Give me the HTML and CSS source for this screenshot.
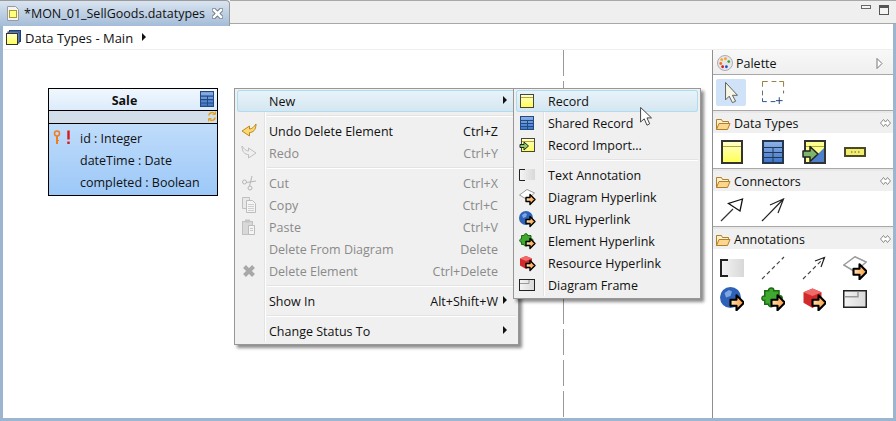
FILE: index.html
```html
<!DOCTYPE html>
<html lang="en">

<head>
  <meta charset="UTF-8">
  <title>MON_01_SellGoods.datatypes</title>
  <link rel="stylesheet" href="styles.css">
</head>

<body>
  <svg class="defs" width="0" height="0">
    <defs>
      <linearGradient id="yel" x1="0" y1="0" x2="0" y2="1">
        <stop offset="0" stop-color="#ffffd0" />
        <stop offset="1" stop-color="#ffff50" />
      </linearGradient>
      <linearGradient id="blu" x1="0" y1="0" x2="0" y2="1">
        <stop offset="0" stop-color="#8fb4ea" />
        <stop offset="1" stop-color="#3a74c8" />
      </linearGradient>
      <linearGradient id="gry" x1="0" y1="0" x2="1" y2="0">
        <stop offset="0" stop-color="#f4f4f4" />
        <stop offset="1" stop-color="#d8d8d8" />
      </linearGradient>
      <linearGradient id="org" x1="0" y1="0" x2="1" y2="0">
        <stop offset="0" stop-color="#ffe2b4" />
        <stop offset="1" stop-color="#ff9a3a" />
      </linearGradient>
      <g id="arrow">
        <path d="M1 3.500h4V0.500L10 5.500 5 10.500V7.500H1z" fill="url(#org)" stroke="#000" stroke-width="1.400" stroke-linejoin="round" />
      </g>
      <g id="record">
        <rect x="0.500" y="0.500" width="13" height="13" fill="url(#yel)" stroke="#444" />
        <path d="M1 3.500h12" stroke="#b5a53a" />
      </g>
      <g id="shared">
        <rect x="0.500" y="0.500" width="13" height="13" fill="url(#blu)" stroke="#234a80" />
        <path d="M1 4.500h12M1 7.500h12M1 10.500h12M7.500 5v8" stroke="#234a80" />
      </g>
      <g id="folder">
        <path d="M0.500 12.500V2.500h5l1 2h6v2" fill="#fff0cc" stroke="#b07f2c" />
        <path d="M0.500 12.500l2.500-6h11l-2.500 6z" fill="#fbd68c" stroke="#b07f2c" />
      </g>
      <g id="pin-icon">
        <path d="M3.500 0.500L0.500 4l3 3.500 2-2.500 2 2.500 3-3.500-3-3.500-2 2.500z" fill="#fff" stroke="#8a8a8a" />
      </g>
      <g id="globe">
        <circle cx="7" cy="7" r="7" fill="#2d62b8" />
        <path d="M3 4l3-2 2 1-1 3-3 1zM8 9l3-1 1 2-3 2z" fill="#7fa6e0" />
      </g>
      <g id="puzzle">
        <path d="M5 2.500C5 0 9 0 8.500 2.500H12V6c2-1 3.500 2.500 0 3v2H8.500c.5 2.500-3.500 3-3.500 .5H2.500V9C0 9.500 0 5.500 2.500 6V2.500z" fill="#3fa82e" stroke="#1d6b14" />
      </g>
      <g id="cube">
        <path d="M1 3.500L7 1l6 2.500v7L7 14l-6-3.500z" fill="#d22a2a" />
        <path d="M1 3.500L7 6l6-2.500L7 1z" fill="#f06a6a" />
      </g>
      <g id="diamond">
        <path d="M0.500 6L8 0.500 15.500 4 8 10.500z" fill="#fff" stroke="#9a9a9a" />
      </g>
      <g id="frame">
        <rect x="0.500" y="0.500" width="15" height="11" fill="url(#gry)" stroke="#222" />
        <path d="M1 4.500h9V1" fill="none" stroke="#999" />
      </g>
      <g id="note">
        <rect x="1" y="0" width="15" height="11" fill="url(#gry)" />
        <path d="M6 0.500H0.500v11H6" fill="none" stroke="#222" />
      </g>
    </defs>
  </svg>

  <div class="window">
    <div class="tabbar">
      <div class="tab">
        <svg class="tab-icon" width="12" height="15" viewBox="0 0 12 15">
          <path d="M0.500 0.500h8l3 3v11h-11z" fill="#f4f4f4" stroke="#9a9a9a" />
          <rect x="2.500" y="4.500" width="7" height="7" fill="#ffff80" stroke="#a89a30" />
        </svg>
        <span class="tab-title">*MON_01_SellGoods.datatypes</span>
        <span class="tab-close">
          <svg width="11" height="11" viewBox="0 0 11 11">
            <path d="M2 2l7 7M9 2l-7 7" stroke="#66717e" stroke-width="4.400" stroke-linecap="square" />
            <path d="M2 2l7 7M9 2l-7 7" stroke="#fff" stroke-width="2.600" stroke-linecap="square" />
          </svg>
        </span>
      </div>
      <div class="tabbar-rest">
        <span class="min-btn"></span>
        <span class="max-btn"></span>
      </div>
    </div>

    <div class="editor">
      <div class="crumbs">
        <svg class="crumb-icon" width="16" height="16" viewBox="0 0 16 16">
          <rect x="3.500" y="0.500" width="11" height="11" fill="#5b86c8" stroke="#1f3f70" />
          <rect x="2" y="2" width="11" height="11" fill="#a7bddc" stroke="#1f3f70" />
          <rect x="0.500" y="3.500" width="11" height="11" fill="url(#yel)" stroke="#333" />
        </svg>
        <span class="crumb-text">Data Types - Main</span>
        <span class="tri-black"></span>
      </div>

      <div class="workspace">
        <div class="canvas">
          <div class="dashed-line"></div>

          <div class="record">
            <div class="record-head">
              <b>Sale</b>
              <svg class="record-icon" width="14" height="16" viewBox="0 0 14 14" preserveAspectRatio="none"><use href="#shared" /></svg>
            </div>
            <div class="record-band">
              <svg width="8" height="11" viewBox="0 0 8 11">
                <path d="M1 4.500C1 1.500 5 0.500 7 3M7 6.500C7 9.500 3 10.500 1 8" fill="none" stroke="#e2a21c" stroke-width="1.600" />
                <path d="M7.500 0.500v3h-3M0.500 10.500v-3h3" fill="none" stroke="#e2a21c" />
              </svg>
            </div>
            <div class="record-body">
              <div class="attr">
                <svg class="key" width="18" height="15" viewBox="0 0 18 15">
                  <circle cx="4" cy="3.500" r="2.500" fill="none" stroke="#ef7d22" stroke-width="1.500" />
                  <path d="M4 6v8" stroke="#ef7d22" stroke-width="2" />
                  <path d="M5 10.500h1" stroke="#ef7d22" />
                  <path d="M15.500 0.500v9M15.500 11.500v2.500" stroke="#d91a1a" stroke-width="2.400" />
                </svg>
                <span>id : Integer</span>
              </div>
              <div class="attr"><span>dateTime : Date</span></div>
              <div class="attr"><span>completed : Boolean</span></div>
            </div>
          </div>

          <div class="menu menu-main">
            <div class="menu-rail"></div>
            <div class="item item-active"><span class="ic"></span><span class="lbl">New</span><span class="key-hint"></span><span class="more"></span></div>
            <div class="sep"></div>
            <div class="item">
              <span class="ic">
                <svg width="16" height="16" viewBox="0 0 16 16">
                  <path d="M15 1c0 6-3 8.500-6.500 8.500V13L1 8l7.500-5v3C11 6 13 4 15 1z" fill="#ffd873" stroke="#b8891f" stroke-linejoin="round" />
                </svg>
              </span>
              <span class="lbl">Undo Delete Element</span><span class="key-hint">Ctrl+Z</span><span class="more-gap"></span>
            </div>
            <div class="item off">
              <span class="ic">
                <svg width="16" height="16" viewBox="0 0 16 16">
                  <path d="M1 1c0 6 3 8.500 6.500 8.500V13L15 8 7.500 3v3C5 6 3 4 1 1z" fill="#f0f0f0" stroke="#bfbfbf" stroke-linejoin="round" />
                </svg>
              </span>
              <span class="lbl">Redo</span><span class="key-hint">Ctrl+Y</span><span class="more-gap"></span>
            </div>
            <div class="sep"></div>
            <div class="item off">
              <span class="ic">
                <svg width="16" height="16" viewBox="0 0 16 16">
                  <circle cx="3.500" cy="7" r="2" fill="none" stroke="#b5b5b5" />
                  <circle cx="9" cy="13" r="2" fill="none" stroke="#b5b5b5" />
                  <path d="M5.500 7.500L15 6M8.500 11L11 1" stroke="#b5b5b5" fill="none" />
                </svg>
              </span>
              <span class="lbl">Cut</span><span class="key-hint">Ctrl+X</span><span class="more-gap"></span>
            </div>
            <div class="item off">
              <span class="ic">
                <svg width="16" height="16" viewBox="0 0 16 16">
                  <path d="M1.500 0.500h7v11h-7z" fill="#e8e8e8" stroke="#c0c0c0" />
                  <path d="M5.500 3.500h6l3 3v9h-9z" fill="#f5f5f5" stroke="#bcbcbc" />
                  <path d="M7 7.500h6M7 9.500h6M7 11.500h6M7 13.500h6" stroke="#cfcfcf" />
                </svg>
              </span>
              <span class="lbl">Copy</span><span class="key-hint">Ctrl+C</span><span class="more-gap"></span>
            </div>
            <div class="item off">
              <span class="ic">
                <svg width="16" height="16" viewBox="0 0 16 16">
                  <rect x="1.500" y="2.500" width="10" height="13" fill="#d8d8d8" stroke="#c0c0c0" />
                  <rect x="4" y="0.500" width="5" height="3" fill="#c4c4c4" />
                  <path d="M7.500 6.500h6v9h-6z" fill="#f5f5f5" stroke="#bcbcbc" />
                  <path d="M9 9.500h3M9 11.500h3" stroke="#c8c8c8" />
                </svg>
              </span>
              <span class="lbl">Paste</span><span class="key-hint">Ctrl+V</span><span class="more-gap"></span>
            </div>
            <div class="item off"><span class="ic"></span><span class="lbl">Delete From Diagram</span><span class="key-hint">Delete</span><span class="more-gap"></span></div>
            <div class="item off">
              <span class="ic">
                <svg width="16" height="16" viewBox="0 0 16 16">
                  <path d="M3.500 3.500l9 9M12.500 3.500l-9 9" stroke="#a8a8a8" stroke-width="4" />
                </svg>
              </span>
              <span class="lbl">Delete Element</span><span class="key-hint">Ctrl+Delete</span><span class="more-gap"></span>
            </div>
            <div class="sep"></div>
            <div class="item"><span class="ic"></span><span class="lbl">Show In</span><span class="key-hint">Alt+Shift+W</span><span class="more"></span></div>
            <div class="sep"></div>
            <div class="item"><span class="ic"></span><span class="lbl">Change Status To</span><span class="key-hint"></span><span class="more"></span></div>
          </div>

          <div class="menu menu-sub">
            <div class="menu-rail"></div>
            <div class="item item-active">
              <span class="ic"><svg width="16" height="16" viewBox="0 0 16 16"><g transform="translate(1 1)"><use href="#record" /></g></svg></span>
              <span class="lbl">Record</span>
            </div>
            <div class="item">
              <span class="ic"><svg width="16" height="16" viewBox="0 0 16 16"><g transform="translate(1 1)"><use href="#shared" /></g></svg></span>
              <span class="lbl">Shared Record</span>
            </div>
            <div class="item">
              <span class="ic">
                <svg width="16" height="16" viewBox="0 0 16 16">
                  <g transform="translate(2 1)"><use href="#record" /></g>
                  <path d="M1 7.500h4V5l4.500 4L5 13v-2.500H1z" fill="#8ecb6a" stroke="#222" stroke-linejoin="round" />
                </svg>
              </span>
              <span class="lbl">Record Import...</span>
            </div>
            <div class="sep"></div>
            <div class="item">
              <span class="ic"><svg width="17" height="13" viewBox="0 0 17 13"><use href="#note" /></svg></span>
              <span class="lbl">Text Annotation</span>
            </div>
            <div class="item">
              <span class="ic">
                <svg width="17" height="17" viewBox="0 0 17 17"><use href="#diamond" /><g transform="translate(6 5)"><use href="#arrow" /></g></svg>
              </span>
              <span class="lbl">Diagram Hyperlink</span>
            </div>
            <div class="item">
              <span class="ic">
                <svg width="17" height="17" viewBox="0 0 17 17"><use href="#globe" /><g transform="translate(6 5)"><use href="#arrow" /></g></svg>
              </span>
              <span class="lbl">URL Hyperlink</span>
            </div>
            <div class="item">
              <span class="ic">
                <svg width="17" height="17" viewBox="0 0 17 17"><use href="#puzzle" /><g transform="translate(6 5)"><use href="#arrow" /></g></svg>
              </span>
              <span class="lbl">Element Hyperlink</span>
            </div>
            <div class="item">
              <span class="ic">
                <svg width="17" height="17" viewBox="0 0 17 17"><use href="#cube" /><g transform="translate(6 5)"><use href="#arrow" /></g></svg>
              </span>
              <span class="lbl">Resource Hyperlink</span>
            </div>
            <div class="item">
              <span class="ic"><svg width="16" height="12" viewBox="0 0 16 12"><use href="#frame" /></svg></span>
              <span class="lbl">Diagram Frame</span>
            </div>
          </div>

          <svg class="pointer" width="13" height="20" viewBox="0 0 14 22">
            <path d="M0.500 0.500v16l4-3.500 3 7 3-1.500-3-6.500h5z" fill="#fff" stroke="#333" stroke-linejoin="round" />
          </svg>
        </div>

        <div class="palette">
          <div class="pal-title">
            <svg width="16" height="16" viewBox="0 0 17 17">
              <ellipse cx="8.500" cy="8.500" rx="8" ry="8" fill="#e6e6ea" stroke="#a8a8b0" />
              <circle cx="5" cy="5" r="1.500" fill="#f5a623" />
              <circle cx="9" cy="4" r="1.500" fill="#f5a623" />
              <circle cx="12.500" cy="7" r="1.500" fill="#3aa52e" />
              <circle cx="4" cy="9" r="1.500" fill="#f07020" />
              <circle cx="6" cy="12.500" r="1.500" fill="#d02020" />
              <circle cx="10" cy="12.500" r="1.500" fill="#2050c8" />
            </svg>
            <span>Palette</span>
            <svg class="pal-collapse" width="7" height="11" viewBox="0 0 7 11"><path d="M1 0.500L6 5.500 1 10.500z" fill="#fff" stroke="#777" /></svg>
          </div>

          <div class="tools tools-top">
            <span class="tool tool-on">
              <svg width="13" height="22" viewBox="0 0 14 24">
                <path d="M0.500 0.500v19l4-4 3.500 7 3.500-1.500-3.500-6.500h5.500z" fill="#f8f6e4" stroke="#555" stroke-linejoin="round" />
              </svg>
            </span>
            <span class="tool">
              <svg width="23" height="23" viewBox="0 0 24 24">
                <path d="M0.500 6V0.500H6M10 0.500h5M18 0.500h4.500V6" fill="none" stroke="#8f7a34" />
                <path d="M22.500 10v3M0.500 10v5" fill="none" stroke="#5d6a5a" />
                <path d="M0.500 18v3.500H5M9 21.500h5" fill="none" stroke="#1d4f88" />
                <path d="M18 17v7M14.500 20.500h7" stroke="#1d3f78" />
              </svg>
            </span>
          </div>

          <div class="drawer">
            <div class="drawer-head">
              <svg width="15" height="13" viewBox="0 0 15 13"><use href="#folder" /></svg>
              <span>Data Types</span>
              <span class="pin"><svg width="11" height="8" viewBox="0 0 11 8"><use href="#pin-icon" /></svg></span>
            </div>
            <div class="tools">
              <span class="tool">
                <svg width="22" height="24" viewBox="0 0 22 24">
                  <rect x="1" y="1" width="20" height="22" fill="url(#yel)" stroke="#333" stroke-width="2" />
                  <path d="M2 6.500h18" stroke="#b5a53a" />
                </svg>
              </span>
              <span class="tool">
                <svg width="22" height="24" viewBox="0 0 22 24">
                  <rect x="1" y="1" width="20" height="22" fill="url(#blu)" stroke="#26364f" stroke-width="2" />
                  <path d="M2 7.500h18M2 12.500h18M2 17.500h18M11 8v15" stroke="#26364f" />
                </svg>
              </span>
              <span class="tool">
                <svg width="24" height="24" viewBox="0 0 24 24">
                  <rect x="3" y="1" width="20" height="22" fill="#ffff90" stroke="#333" stroke-width="2" />
                  <path d="M22 8v14H8z" fill="#4c80cc" />
                  <path d="M4 6.500h18" stroke="#b5a53a" />
                  <path d="M1 11h7V6.500l8 7.500-8 7.500V17H1z" fill="#7db56a" stroke="#222" stroke-width="1.500" stroke-linejoin="round" />
                </svg>
              </span>
              <span class="tool">
                <svg width="22" height="10" viewBox="0 0 22 10">
                  <rect x="1" y="1" width="20" height="8" fill="#f3ee6a" stroke="#4a4a2a" stroke-width="2" />
                  <path d="M7 5h1.500M10.500 5h1.500M14 5h1.500" stroke="#555" />
                </svg>
              </span>
            </div>
          </div>

          <div class="drawer">
            <div class="drawer-head">
              <svg width="15" height="13" viewBox="0 0 15 13"><use href="#folder" /></svg>
              <span>Connectors</span>
              <span class="pin"><svg width="11" height="8" viewBox="0 0 11 8"><use href="#pin-icon" /></svg></span>
            </div>
            <div class="tools">
              <span class="tool">
                <svg width="24" height="24" viewBox="0 0 24 24">
                  <path d="M1 23L13 11" stroke="#333" stroke-width="1.200" />
                  <path d="M22.500 1L8.500 5.500 20 13z" fill="#fff" stroke="#111" stroke-width="1.300" />
                </svg>
              </span>
              <span class="tool">
                <svg width="24" height="24" viewBox="0 0 24 24">
                  <path d="M1 23L22.500 1M9 7L22.500 1 17 15" fill="none" stroke="#222" stroke-width="1.200" />
                </svg>
              </span>
            </div>
          </div>

          <div class="drawer">
            <div class="drawer-head">
              <svg width="15" height="13" viewBox="0 0 15 13"><use href="#folder" /></svg>
              <span>Annotations</span>
              <span class="pin"><svg width="11" height="8" viewBox="0 0 11 8"><use href="#pin-icon" /></svg></span>
            </div>
            <div class="tools">
              <span class="tool">
                <svg width="24" height="18" viewBox="0 0 24 18">
                  <rect x="1" y="0" width="23" height="18" fill="url(#gry)" />
                  <path d="M8 1H1v16h7" fill="none" stroke="#222" stroke-width="2" />
                </svg>
              </span>
              <span class="tool">
                <svg width="24" height="24" viewBox="0 0 24 24">
                  <path d="M1 23L23 1" stroke="#444" stroke-width="1.200" stroke-dasharray="4 3" />
                </svg>
              </span>
              <span class="tool">
                <svg width="24" height="24" viewBox="0 0 24 24">
                  <path d="M1 23L22.500 1.500" stroke="#444" stroke-width="1.200" stroke-dasharray="4 3" />
                  <path d="M13 5L22.500 1.500 19 11" fill="none" stroke="#222" stroke-width="1.200" />
                </svg>
              </span>
              <span class="tool">
                <svg width="24" height="24" viewBox="0 0 16 16"><use href="#diamond" /><g transform="translate(6 5)"><use href="#arrow" /></g></svg>
              </span>
              <span class="tool">
                <svg width="24" height="24" viewBox="0 0 16 16"><use href="#globe" /><g transform="translate(6 5)"><use href="#arrow" /></g></svg>
              </span>
              <span class="tool">
                <svg width="24" height="24" viewBox="0 0 16 16"><use href="#puzzle" /><g transform="translate(6 5)"><use href="#arrow" /></g></svg>
              </span>
              <span class="tool">
                <svg width="24" height="24" viewBox="0 0 16 16"><use href="#cube" /><g transform="translate(6 5)"><use href="#arrow" /></g></svg>
              </span>
              <span class="tool">
                <svg width="24" height="18" viewBox="0 0 16 12"><use href="#frame" /></svg>
              </span>
            </div>
          </div>
        </div>
      </div>
    </div>
  </div>
</body>

</html>
```

FILE: styles.css
```css
html,
body {
  margin: 0;
  padding: 0;
  height: 421px;
  overflow: hidden;
}

body {
  font-family: "Open Sans", "Noto Sans", sans-serif;
  font-size: 12.5px;
  color: #111;
  background-color: #fff;
}

.defs {
  position: absolute;
}

.window {
  height: 421px;
  display: flex;
  flex-direction: column;
  box-sizing: border-box;
}

/* tab strip */
.tabbar {
  display: flex;
  height: 26px;
  flex: none;
  background: linear-gradient(to left, #9db6d0 3px, #fff 3px);
}

.tab {
  flex: none;
  width: 230px;
  height: 26px;
  box-sizing: border-box;
  display: flex;
  align-items: center;
  padding-left: 7px;
  background: linear-gradient(#d9e4f0, #a4bcd8);
  border-top: 1px solid #9a9a9a;
  border-right: 1px solid #9a9a9a;
  border-radius: 0 4px 0 0;
}

.tab-icon {
  flex: none;
}

.tab-title {
  margin-left: 5px;
  color: #111;
}

.tab-close {
  display: flex;
  margin-left: 7px;
}

.tabbar-rest {
  flex: 1;
  height: 24px;
  display: flex;
  justify-content: flex-end;
  align-items: flex-start;
  gap: 8px;
  padding: 4px 7px 0 0;
  box-sizing: border-box;
  border-top: 1px solid #a8a8a8;
  border-bottom: 1px solid #a8a8a8;
  background-color: #efefef;
}

.min-btn {
  width: 8px;
  height: 2px;
  border: 1px solid #666;
  background-color: #f4f4f4;
}

.max-btn {
  width: 8px;
  height: 6px;
  border: 1px solid #555;
  border-top-width: 3px;
  background-color: #f4f4f4;
}

/* editor frame */
.editor {
  flex: 1;
  min-height: 0;
  display: flex;
  flex-direction: column;
  background-color: #fff;
  border-left: 3px solid #9db6d0;
  border-right: 3px solid #9db6d0;
  border-bottom: 3px solid #9db6d0;
}

.crumbs {
  flex: none;
  height: 24px;
  display: flex;
  align-items: center;
  gap: 3px;
  padding-left: 3px;
  box-sizing: border-box;
  border-bottom: 1px solid #efefef;
  background-color: #fff;
}

.crumb-icon {
  flex: none;
}

.crumb-text {
  font-size: 13px;
}

.tri-black {
  margin: -2px 0 0 6px;
  border-left: 4px solid #111;
  border-top: 4px solid transparent;
  border-bottom: 4px solid transparent;
}

.workspace {
  flex: 1;
  min-height: 0;
  display: flex;
}

/* free canvas: diagram nodes and open menus */
.canvas {
  position: relative;
  flex: 1;
  background-color: #fff;
}

.dashed-line {
  position: absolute;
  left: 560px;
  top: 0;
  bottom: 0;
  width: 1px;
  background-image: linear-gradient(#999 26px, transparent 26px);
  background-size: 1px 31px;
}

.record {
  position: absolute;
  left: 45px;
  top: 38px;
  width: 170px;
  height: 108px;
  box-sizing: border-box;
  border: 1px solid #000;
  background: linear-gradient(#d2e6fb, #9cc8f8);
}

.record-head {
  height: 20px;
  display: flex;
  align-items: center;
  justify-content: center;
  position: relative;
  padding: 1px 17px 0 0;
  background: linear-gradient(#f0f7fe, #dcecfb);
  border-bottom: 1px solid #000;
}

.record-icon {
  position: absolute;
  right: 3px;
  top: 2px;
}

.record-band {
  height: 12px;
  display: flex;
  justify-content: flex-end;
  padding-right: 1px;
  background-color: #d2dfea;
  border-bottom: 1px solid #000;
}

.record-body {
  padding-top: 3px;
}

.attr {
  height: 22px;
  display: flex;
  align-items: center;
  padding-left: 31px;
  position: relative;
}

.key {
  position: absolute;
  left: 4px;
  top: 3px;
}

.menu {
  position: absolute;
  box-sizing: border-box;
  background-color: #f0f0f0;
  border: 1px solid #979797;
  padding: 1px 2px;
  box-shadow: 3px 3px 3px rgba(0, 0, 0, 0.45);
}

.menu-main {
  left: 231px;
  top: 38px;
  width: 285px;
  height: 257px;
}

.menu-sub {
  left: 510px;
  top: 38px;
  width: 188px;
  height: 211px;
}

.menu-rail {
  position: absolute;
  top: 2px;
  bottom: 2px;
  left: 29px;
  width: 1px;
  background-color: #e3e3e3;
  border-right: 1px solid #fff;
}

.item {
  position: relative;
  height: 22px;
  display: flex;
  align-items: center;
  color: #111;
}

.item-active {
  border-radius: 3px;
  box-shadow: inset 0 0 0 1px #aedcf0;
  background: linear-gradient(#e9f3f9, #d4e6f1);
}

.off {
  color: #8a8a8a;
}

.ic {
  flex: none;
  width: 30px;
  display: flex;
  justify-content: center;
  align-items: center;
  padding-right: 6px;
  box-sizing: border-box;
}

.menu-sub .ic {
  padding-right: 8px;
}

.lbl {
  flex: 1;
  padding-left: 2px;
}

.key-hint {
  flex: none;
}

.more,
.more-gap {
  flex: none;
  width: 18px;
}

.more {
  position: relative;
}

.more::after {
  content: "";
  position: absolute;
  left: 5px;
  top: -5px;
  border-left: 4px solid #111;
  border-top: 4px solid transparent;
  border-bottom: 4px solid transparent;
}

.sep {
  height: 8px;
  margin-left: 30px;
  position: relative;
}

.sep::after {
  content: "";
  position: absolute;
  left: 0;
  right: 0;
  top: 3px;
  height: 2px;
  background-color: #e3e3e3;
  border-bottom: 1px solid #fff;
  box-sizing: border-box;
}

.pointer {
  position: absolute;
  left: 637px;
  top: 57px;
}

/* palette */
.palette {
  flex: none;
  width: 181px;
  box-sizing: border-box;
  border-left: 1px solid #8f8f8f;
  background-color: #fff;
}

.pal-title {
  height: 25px;
  display: flex;
  align-items: center;
  gap: 3px;
  padding: 2px 0 0 4px;
  box-sizing: border-box;
  border-bottom: 1px solid #a8a8a8;
  background: linear-gradient(#f8f8f8, #efefef);
}

.pal-collapse {
  margin-left: auto;
  margin-right: 10px;
}

.tools {
  display: flex;
  flex-wrap: wrap;
  padding: 3px 2px 1px;
}

.tools-top {
  height: 36px;
  padding-top: 4px;
  box-sizing: border-box;
  border-bottom: 1px solid #a8a8a8;
}

.tool {
  width: 33px;
  height: 31px;
  margin-right: 8px;
  display: flex;
  align-items: center;
  justify-content: center;
}

.tools-top .tool {
  width: 30px;
  height: 27px;
  margin-right: 12px;
  border-radius: 2px;
}

.tools-top .tool-on {
  margin-left: 1px;
  background-color: #cfe2f8;
}

.drawer {
  border-top: 2px solid #e8e8e8;
  border-bottom: 1px solid #a8a8a8;
}

.drawer:last-child {
  border-bottom: none;
}

.drawer-head {
  height: 20px;
  display: flex;
  align-items: center;
  gap: 3px;
  padding-left: 3px;
  background-color: #f0f0f0;
}

.pin {
  margin-left: auto;
  margin-right: 2px;
  display: flex;
}
```
